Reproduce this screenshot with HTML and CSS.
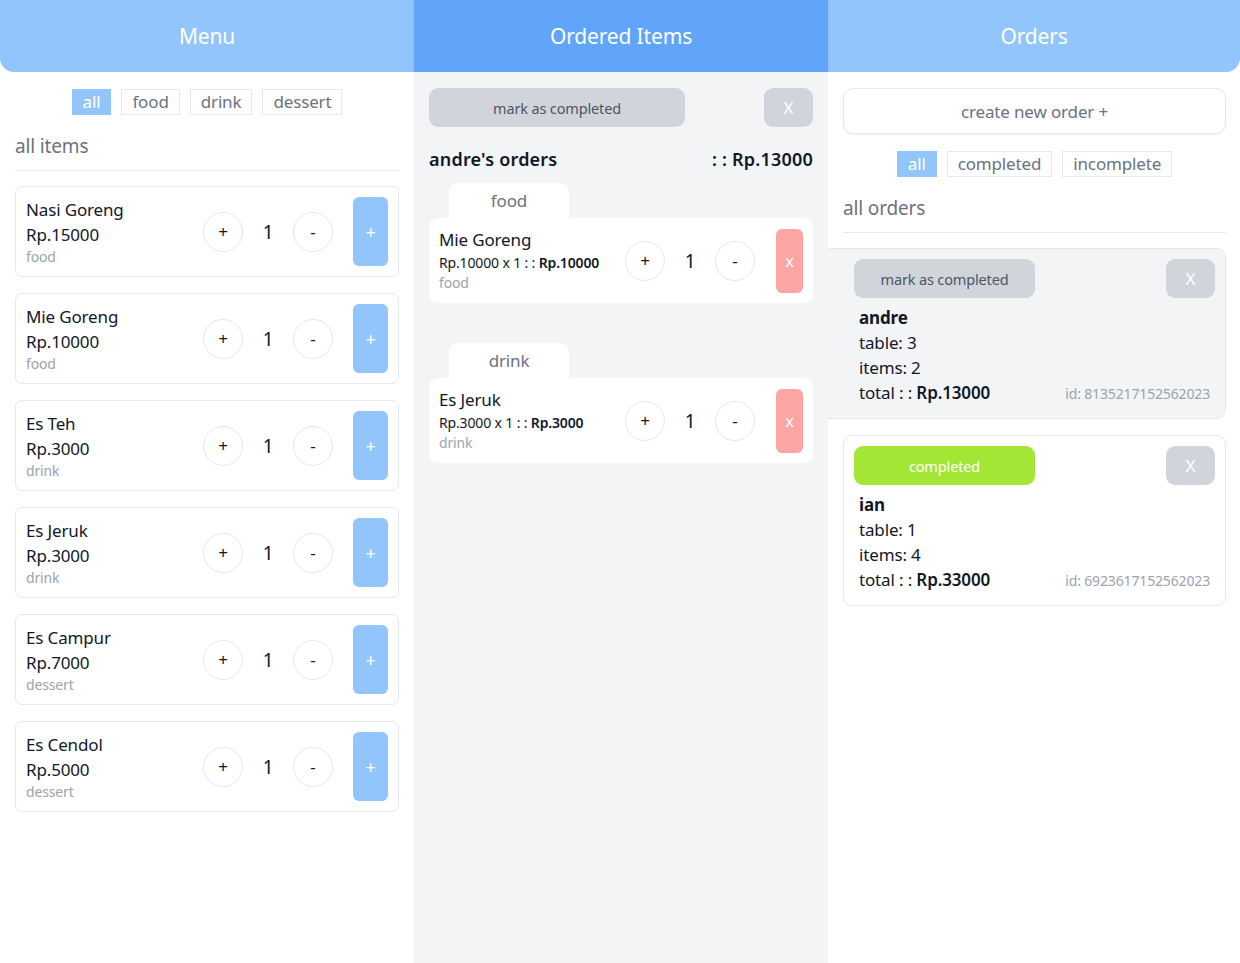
FILE: index.html
```html
<!DOCTYPE html>
<html>
<head>
<meta charset="utf-8">
<link rel="stylesheet" href="styles.css">
</head>
<body>
<div class="app">
  <section class="col col-menu">
    <header class="col-head head-menu">Menu</header>
    <div class="col-body">
      <div class="filters">
        <button class="chip active">all</button>
        <button class="chip">food</button>
        <button class="chip">drink</button>
        <button class="chip">dessert</button>
      </div>
      <h2 class="section-title">all items</h2>
      <div class="menu-list">
        <div class="menu-card">
          <div class="info"><div class="name">Nasi Goreng</div><div class="price">Rp.15000</div><div class="cat">food</div></div>
          <div class="qty"><button class="circle">+</button><span class="num">1</span><button class="circle">-</button></div>
          <button class="add-btn">+</button>
        </div>
        <div class="menu-card">
          <div class="info"><div class="name">Mie Goreng</div><div class="price">Rp.10000</div><div class="cat">food</div></div>
          <div class="qty"><button class="circle">+</button><span class="num">1</span><button class="circle">-</button></div>
          <button class="add-btn">+</button>
        </div>
        <div class="menu-card">
          <div class="info"><div class="name">Es Teh</div><div class="price">Rp.3000</div><div class="cat">drink</div></div>
          <div class="qty"><button class="circle">+</button><span class="num">1</span><button class="circle">-</button></div>
          <button class="add-btn">+</button>
        </div>
        <div class="menu-card">
          <div class="info"><div class="name">Es Jeruk</div><div class="price">Rp.3000</div><div class="cat">drink</div></div>
          <div class="qty"><button class="circle">+</button><span class="num">1</span><button class="circle">-</button></div>
          <button class="add-btn">+</button>
        </div>
        <div class="menu-card">
          <div class="info"><div class="name">Es Campur</div><div class="price">Rp.7000</div><div class="cat">dessert</div></div>
          <div class="qty"><button class="circle">+</button><span class="num">1</span><button class="circle">-</button></div>
          <button class="add-btn">+</button>
        </div>
        <div class="menu-card">
          <div class="info"><div class="name">Es Cendol</div><div class="price">Rp.5000</div><div class="cat">dessert</div></div>
          <div class="qty"><button class="circle">+</button><span class="num">1</span><button class="circle">-</button></div>
          <button class="add-btn">+</button>
        </div>
      </div>
    </div>
  </section>

  <section class="col col-ordered">
    <header class="col-head head-ordered">Ordered Items</header>
    <div class="col-body">
      <div class="action-row">
        <button class="btn-mark wide">mark as completed</button>
        <button class="btn-x">X</button>
      </div>
      <div class="order-title">
        <span>andre's orders</span>
        <span>: : Rp.13000</span>
      </div>
      <div class="group">
        <div class="tab">food</div>
        <div class="item-card">
          <div class="info"><div class="name">Mie Goreng</div><div class="sub">Rp.10000 x 1 : : <b>Rp.10000</b></div><div class="cat">food</div></div>
          <div class="qty"><button class="circle">+</button><span class="num">1</span><button class="circle">-</button></div>
          <button class="del-btn">x</button>
        </div>
      </div>
      <div class="group">
        <div class="tab">drink</div>
        <div class="item-card">
          <div class="info"><div class="name">Es Jeruk</div><div class="sub">Rp.3000 x 1 : : <b>Rp.3000</b></div><div class="cat">drink</div></div>
          <div class="qty"><button class="circle">+</button><span class="num">1</span><button class="circle">-</button></div>
          <button class="del-btn">x</button>
        </div>
      </div>
    </div>
  </section>

  <section class="col col-orders">
    <header class="col-head head-orders">Orders</header>
    <div class="col-body">
      <button class="create-btn">create new order +</button>
      <div class="filters">
        <button class="chip active">all</button>
        <button class="chip">completed</button>
        <button class="chip">incomplete</button>
      </div>
      <h2 class="section-title">all orders</h2>
      <div class="order-list">
        <div class="order-card selected">
          <div class="action-row">
            <button class="btn-mark">mark as completed</button>
            <button class="btn-x">X</button>
          </div>
          <div class="o-name">andre</div>
          <div class="o-line">table: 3</div>
          <div class="o-line">items: 2</div>
          <div class="o-line o-total"><span>total : : <b>Rp.13000</b></span><span class="o-id">id: 8135217152562023</span></div>
        </div>
        <div class="order-card">
          <div class="action-row">
            <button class="btn-mark done">completed</button>
            <button class="btn-x">X</button>
          </div>
          <div class="o-name">ian</div>
          <div class="o-line">table: 1</div>
          <div class="o-line">items: 4</div>
          <div class="o-line o-total"><span>total : : <b>Rp.33000</b></span><span class="o-id">id: 6923617152562023</span></div>
        </div>
      </div>
    </div>
  </section>
</div>
</body>
</html>
```

FILE: styles.css
```css
* { box-sizing: border-box; }
html, body { margin: 0; padding: 0; height: 100%; }
body {
  font-family: "Segoe UI", "Noto Sans", "Open Sans", sans-serif;
  color: #111827;
  background: #fff;
  letter-spacing: -0.15px;
}
button {
  font-family: inherit;
  letter-spacing: inherit;
  cursor: pointer;
}
.app {
  display: grid;
  grid-template-columns: 414px 414px 1fr;
  min-height: 963px;
}
.col { display: flex; flex-direction: column; }
.col-head {
  height: 72px;
  display: flex;
  align-items: center;
  justify-content: center;
  color: #fff;
  font-size: 21px;
  font-weight: 400;
  padding-bottom: 1px;
}
.head-menu { background: #93c5fd; border-bottom-left-radius: 14px; }
.head-ordered { background: #60a5fa; }
.head-orders { background: #93c5fd; border-bottom-right-radius: 14px; }
.col-body { flex: 1; padding: 16px 15px 15px; }
.col-menu .col-body { padding-top: 17px; }
.col-ordered .col-body { background: #f3f4f6; }
.col-orders .col-body { padding-right: 14px; }

.filters {
  display: flex;
  justify-content: center;
  gap: 10px;
}
.chip {
  height: 26px;
  padding: 0 10px;
  border: 1px solid #e5e7eb;
  background: #fff;
  color: #6b7280;
  font-size: 17px;
  line-height: 22px;
  border-radius: 0;
}
.chip.active { background: #93c5fd; border-color: #93c5fd; color: #fff; }

.section-title {
  margin: 17px 0 0;
  padding-bottom: 10px;
  border-bottom: 1px solid #e5e7eb;
  font-size: 19px;
  font-weight: 400;
  line-height: 28px;
  color: #6b7280;
}

.menu-list {
  display: flex;
  flex-direction: column;
  gap: 16px;
  margin-top: 15px;
}
.menu-card {
  display: flex;
  align-items: center;
  border: 1px solid #e5e7eb;
  border-radius: 7px;
  padding: 10px;
  background: #fff;
}
.info { flex: 1; }
.name { font-size: 17px; line-height: 25px; }
.price { font-size: 17px; line-height: 25px; }
.cat { font-size: 14px; line-height: 19px; color: #9ca3af; }
.qty { display: flex; align-items: center; }
.circle {
  width: 40px;
  height: 40px;
  border-radius: 50%;
  border: 1px solid #e5e7eb;
  background: #fff;
  color: #111827;
  font-size: 17px;
  padding: 0;
}
.num {
  width: 50px;
  text-align: center;
  font-size: 19px;
}
.add-btn {
  margin-left: 20px;
  width: 35px;
  height: 69px;
  border: none;
  border-radius: 6px;
  background: #93c5fd;
  color: #fff;
  font-size: 18px;
  padding: 0;
}

.action-row {
  display: flex;
  justify-content: space-between;
  align-items: center;
}
.btn-mark {
  width: 181px;
  height: 39px;
  border: none;
  border-radius: 9px;
  background: #d1d5db;
  color: #4b5563;
  font-size: 14.5px;
}
.btn-mark.wide { width: 256px; }
.btn-mark.done { background: #a3e635; color: #fff; }
.btn-x {
  width: 49px;
  height: 39px;
  border: none;
  border-radius: 9px;
  background: #d1d5db;
  color: #fff;
  font-size: 17px;
}

.order-title {
  display: flex;
  justify-content: space-between;
  margin-top: 19px;
  font-size: 18px;
  line-height: 26px;
  font-weight: 600;
  letter-spacing: 0.2px;
  color: #111827;
}
.group { margin-top: 11px; }
.group + .group { margin-top: 40px; }
.tab {
  margin-left: 20px;
  width: 120px;
  height: 35px;
  background: #fff;
  border-radius: 9px 9px 0 0;
  display: flex;
  align-items: center;
  justify-content: center;
  font-size: 17px;
  color: #6b7280;
}
.item-card {
  display: flex;
  align-items: center;
  background: #fff;
  border-radius: 9px;
  padding: 10px;
}
.item-card .name { line-height: 24px; }
.item-card .cat { line-height: 20px; }
.sub { font-size: 14px; line-height: 21px; }
.sub b { font-weight: 600; }
.del-btn {
  margin-left: 21px;
  width: 27px;
  height: 64px;
  border: none;
  border-radius: 6px;
  background: #fca5a5;
  color: #fff;
  font-size: 16px;
  padding: 0;
}

.create-btn {
  display: block;
  width: 100%;
  height: 46px;
  border: 1px solid #e5e7eb;
  border-radius: 10px;
  background: #fff;
  color: #6b7280;
  font-size: 17px;
  box-shadow: 0 1px 2px rgba(0,0,0,0.05);
}
.col-orders .filters { margin-top: 17px; }

.order-list {
  display: flex;
  flex-direction: column;
  gap: 16px;
  margin-top: 15px;
}
.order-card {
  border: 1px solid #e5e7eb;
  border-radius: 9px;
  padding: 10px 10px 12px;
  background: #fff;
}
.order-card.selected {
  background: #f3f4f6;
  margin-left: -15px;
  padding-left: 26px;
  border-left: none;
  border-radius: 0 9px 9px 0;
}
.order-card .action-row { margin-bottom: 7px; }
.o-name { font-size: 17px; line-height: 25px; font-weight: 700; padding-left: 5px; }
.o-line { font-size: 17px; line-height: 25px; padding-left: 5px; }
.o-total { display: flex; justify-content: space-between; align-items: baseline; padding-right: 5px; }
.o-total b { font-weight: 600; }
.o-id { font-size: 14px; color: #9ca3af; }
```
